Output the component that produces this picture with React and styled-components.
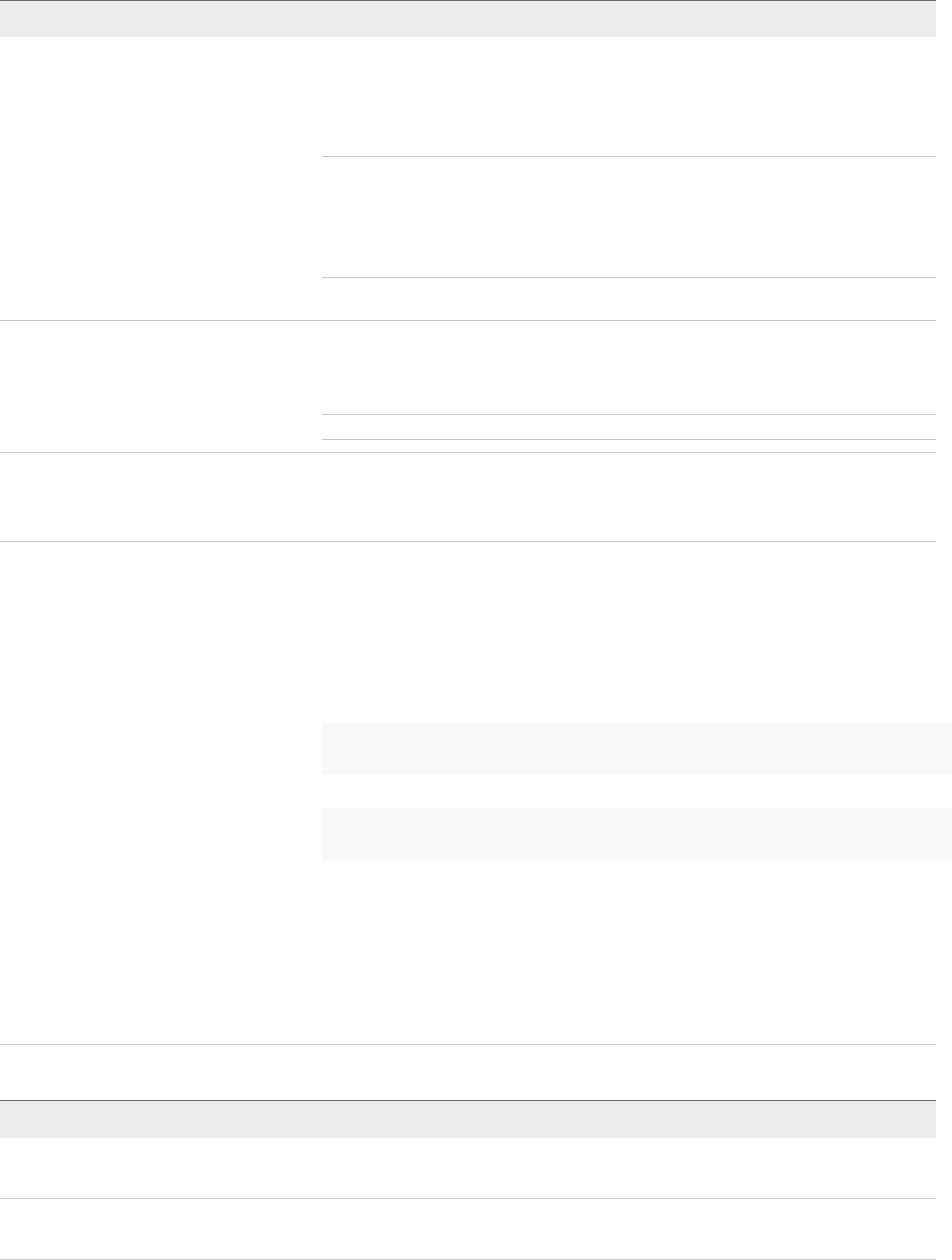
import React from "react";
import styled, { createGlobalStyle } from "styled-components";

const Global = createGlobalStyle`
  html, body { margin: 0; padding: 0; background: #ffffff; }
  body { font-family: "Liberation Sans", Arial, sans-serif; color: #333; overflow-x: hidden; }
`;

const Page = styled.div`
  width: 952px;
  display: flex;
  flex-direction: column;
`;

const Table = styled.div`
  width: 936px;
  display: flex;
  flex-direction: column;
  border-top: 1px solid #666666;
`;

const HeaderRow = styled.div`
  height: ${(p) => p.$h}px;
  background: #ececec;
`;

const Row = styled.div`
  display: grid;
  grid-template-columns: 310px 1fr;
  min-height: ${(p) => p.$h}px;
  border-bottom: 1px solid #c8c8c8;
`;

const FullRow = styled.div`
  height: ${(p) => p.$h}px;
  border-bottom: 1px solid #c8c8c8;
`;

const LabelCell = styled.div``;

const ContentCell = styled.div`
  padding-left: 12px;
  display: flex;
  flex-direction: column;
`;

const Section = styled.div`
  height: ${(p) => p.$h}px;
  border-bottom: ${(p) => (p.$line ? "1px solid #c8c8c8" : "none")};
  flex: none;
`;

const CodeBlock = styled.pre`
  margin: 0;
  height: ${(p) => p.$h}px;
  width: calc(100% + 16px);
  background: #f8f8f8;
  flex: none;
`;

const Spacer = styled.div`
  height: ${(p) => p.$h}px;
  flex: none;
`;

export default function App() {
  return (
    <Page>
      <Global />
      <Table>
        <HeaderRow $h={36} />
        <Row $h={283}>
          <LabelCell />
          <ContentCell>
            <Section $h={119} $line />
            <Section $h={120} $line />
            <Section $h={42} />
          </ContentCell>
        </Row>
        <Row $h={131}>
          <LabelCell />
          <ContentCell>
            <Section $h={93} $line />
            <Section $h={24} $line />
            <Section $h={12} />
          </ContentCell>
        </Row>
        <Row $h={88}>
          <LabelCell />
          <ContentCell />
        </Row>
        <Row $h={502}>
          <LabelCell />
          <ContentCell>
            <Spacer $h={181} />
            <CodeBlock $h={52} />
            <Spacer $h={33} />
            <CodeBlock $h={52} />
          </ContentCell>
        </Row>
      </Table>
      <Spacer $h={55} />
      <Table>
        <HeaderRow $h={37} />
        <FullRow $h={60} />
        <FullRow $h={60} />
      </Table>
    </Page>
  );
}
